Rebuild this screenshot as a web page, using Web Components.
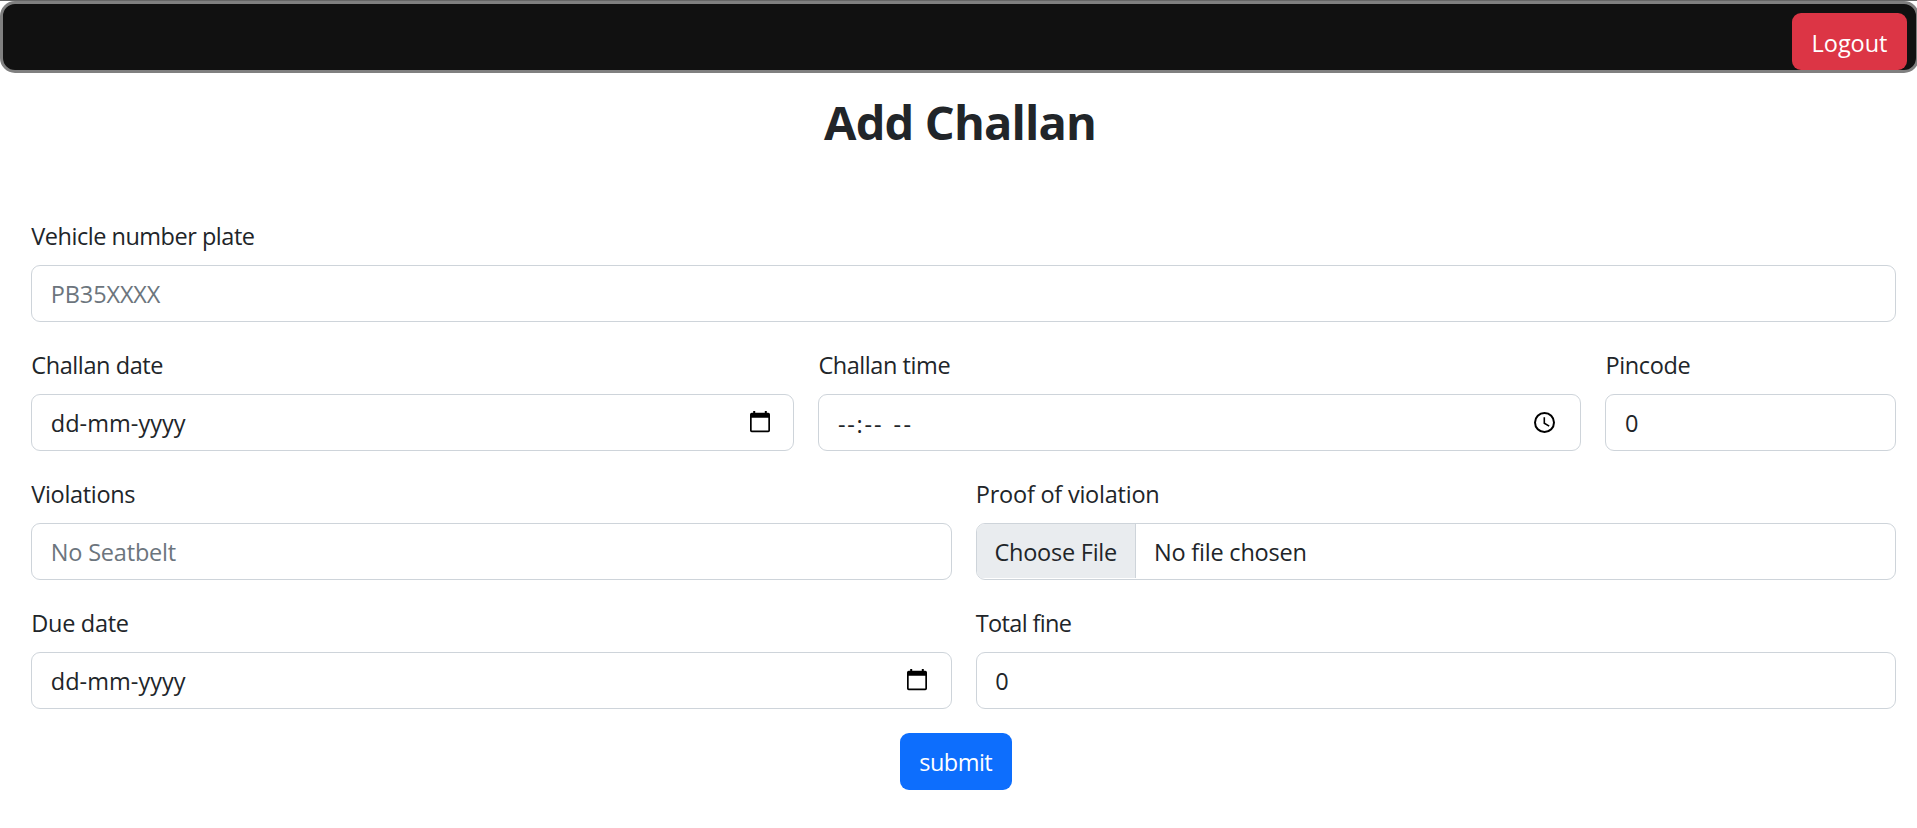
<!DOCTYPE html>
<html lang="en">
<head>
<meta charset="utf-8">
<title>Add Challan</title>
<style>
html,body{margin:0;padding:0;background:#fff}
body{font:400 23.5px/36px "Open Sans","Noto Sans",sans-serif;color:#212529;overflow:hidden}
</style>
</head>
<body>
<challan-page></challan-page>
<script>
const define = (name, html, setup) => customElements.define(name, class extends HTMLElement {
  connectedCallback() {
    if (this.shadowRoot) return;
    const t = document.createElement('template');
    t.innerHTML = html;
    this.attachShadow({mode: 'open'}).append(t.content.cloneNode(true));
    if (setup) setup(this, this.shadowRoot);
  }
});

// Tracks its text so that the ink spans the width given in "w".
const ctx = document.createElement('canvas').getContext('2d');
define('fit-text', `<style>:host{display:inline-block;white-space:pre;font-kerning:normal}</style><slot></slot>`, el => {
  const cs = getComputedStyle(el), s = el.textContent;
  ctx.font = `${cs.fontWeight} ${cs.fontSize} ${cs.fontFamily}`;
  const m = ctx.measureText(s);
  const ink = m.actualBoundingBoxLeft + m.actualBoundingBoxRight;
  if (s.length > 1) {
    const ls = (el.getAttribute('w') - ink) / (s.length - 1);
    el.style.letterSpacing = ls + 'px';
    el.style.marginRight = -ls + 'px';
  }
});

define('app-button', `<style>
:host{display:flex;box-sizing:border-box;height:57px;width:var(--w);align-items:center;justify-content:center;
 border-radius:9px;background:var(--bg);color:#fff;padding-top:var(--drop,0px)}
</style><slot></slot>`);

define('top-bar', `<style>
:host{display:flex;box-sizing:border-box;height:72px;width:1919px;border:3px solid #808080;border-radius:15px;
 background:#111;justify-content:flex-end;align-items:flex-end;padding-right:9px}
</style><slot></slot>`);

const icons = {
  calendar: '<svg width="20" height="22" viewBox="0 0 20 22"><path fill="#000" fill-rule="evenodd" d="M3.200 0h2v1.700h9.600V0h2v1.700h1.500Q20 1.700 20 3.400v16.200Q20 21.300 18.300 21.300H1.700Q0 21.300 0 19.600V3.400Q0 1.700 1.700 1.700h1.500zM1.700 6.800v12.800h16.600V6.800z"/></svg>',
  clock: '<svg width="21" height="21" viewBox="0 0 21 21" fill="none" stroke="#000"><circle cx="10.500" cy="10.500" r="9.500" stroke-width="2"/><path stroke-width="1.600" d="M10.300 5.200v6l4.900 2.900"/></svg>'
};
define('form-field', `<style>
:host{display:block;min-width:0;grid-column:span var(--span)}
.label{box-sizing:border-box;height:36px;margin-bottom:12px;padding:1px 0 0 .3px}
.box{display:flex;box-sizing:border-box;height:57px;border:1px solid #ced4da;border-radius:9px;padding:0 23.500px 0 18.800px;
 align-items:center;overflow:hidden;background:#fff}
:host([icon=clock]) .box{padding-right:25.500px}
:host([muted]) .box{color:#6c757d}
:host([file]) .box{padding:0}
:host([file]) .text{margin-left:18.500px}
slot[name=button]{display:none}
:host([file]) slot[name=button]{display:flex;box-sizing:border-box;width:159px;height:54px;align-self:flex-start;padding:1px 0 0 18px;
 align-items:center;background:#e9ecef;border-right:1px solid #ced4da}
.text{display:flex;gap:12px}
:host([icon=clock]) .text{padding-top:2px}
.icon{display:flex;margin:-1px 0 0 auto}
svg{display:block}
</style>
<div class="label"><slot name="label"></slot></div>
<div class="box"><slot name="button"></slot><div class="text"><slot></slot></div><span class="icon"></span></div>`, (el, root) => {
  root.querySelector('.icon').innerHTML = icons[el.getAttribute('icon')] || '';
});

define('form-grid', `<style>
:host{display:grid;grid-template-columns:repeat(12,minmax(0,1fr));gap:24px;width:1865px;margin-left:31px}
</style><slot></slot>`);

define('challan-page', `<style>
:host{display:block;height:828px;border-top:1px solid #666;box-sizing:border-box;overflow:hidden}
h1{margin:21px 0 0;padding-left:4px;font-size:47px;line-height:56px;font-weight:700;text-align:center}
form-grid{margin-top:67px}
app-button.submit{margin:24px 0 0 900px}
</style>
<top-bar><app-button style="--bg:#dc3545;--w:115px;--drop:2px"><fit-text w="73.500">Logout</fit-text></app-button></top-bar>
<h1><fit-text w="270">Add Challan</fit-text></h1>
<form-grid>
 <form-field style="--span:12" muted><fit-text slot="label" w="222.500">Vehicle number plate</fit-text><fit-text w="108">PB35XXXX</fit-text></form-field>
 <form-field style="--span:5" icon="calendar"><fit-text slot="label" w="130">Challan date</fit-text><fit-text w="134">dd-mm-yyyy</fit-text></form-field>
 <form-field style="--span:5" icon="clock"><fit-text slot="label" w="130">Challan time</fit-text><fit-text w="43">--:--</fit-text><fit-text w="17">--</fit-text></form-field>
 <form-field style="--span:2"><fit-text slot="label" w="82">Pincode</fit-text><fit-text w="12">0</fit-text></form-field>
 <form-field style="--span:6" muted><fit-text slot="label" w="104">Violations</fit-text><fit-text w="123">No Seatbelt</fit-text></form-field>
 <form-field style="--span:6" file><fit-text slot="label" w="180.500">Proof of violation</fit-text><fit-text slot="button" w="120.500">Choose File</fit-text><fit-text w="149.500">No file chosen</fit-text></form-field>
 <form-field style="--span:6" icon="calendar"><fit-text slot="label" w="94.500">Due date</fit-text><fit-text w="134">dd-mm-yyyy</fit-text></form-field>
 <form-field style="--span:6"><fit-text slot="label" w="95">Total fine</fit-text><fit-text w="12">0</fit-text></form-field>
</form-grid>
<app-button class="submit" style="--bg:#0d6efd;--w:112px"><fit-text w="72">submit</fit-text></app-button>`);
</script>
</body>
</html>
